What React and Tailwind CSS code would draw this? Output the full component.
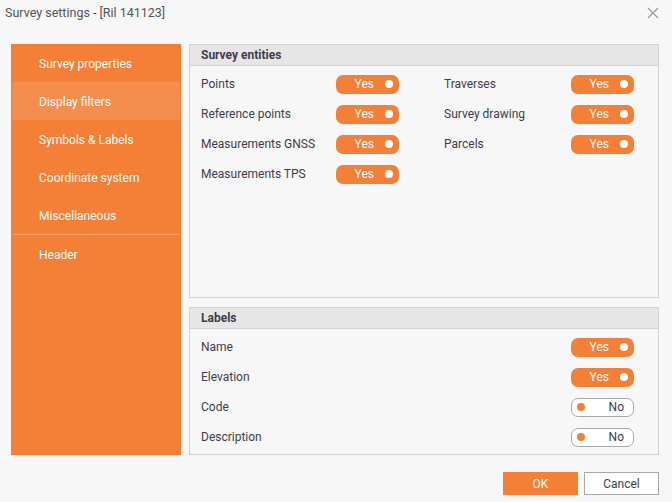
import React from "react";

const font = { fontFamily: "Roboto, 'Noto Sans', sans-serif" };

function Toggle({ on }) {
  if (on) {
    return (
      <div className="flex h-[19px] w-[63px] items-center justify-end rounded-[7px] bg-[#f47f36] pr-[6px] text-[12px] text-white">
        <span className="leading-none">Yes</span>
        <span className="ml-[11px] h-[8px] w-[8px] rounded-full bg-white" />
      </div>
    );
  }
  return (
    <div className="box-border flex h-[19px] w-[63px] items-center rounded-[7px] border border-[#a8a8a8] bg-white pl-[5px] pr-[9px] text-[12px] text-[#3d3d4d]">
      <span className="h-[8px] w-[8px] rounded-full bg-[#f47f36]" />
      <span className="ml-auto leading-none">No</span>
    </div>
  );
}

function Row({ label, on, labelW }) {
  return (
    <div className="flex h-[30px] items-center">
      <span className="text-[12px] text-[#3d3d4d]" style={{ width: labelW }}>
        {label}
      </span>
      <Toggle on={on} />
    </div>
  );
}

const navItems = [
  "Survey properties",
  "Display filters",
  "Symbols & Labels",
  "Coordinate system",
  "Miscellaneous",
];

export default function App() {
  return (
    <div
      className="flex h-[502px] w-[672px] flex-col bg-[#f7f7f7] text-[#3d3d4d]"
      style={font}
    >
      {/* title bar */}
      <div className="flex h-[44px] items-start justify-between pl-[5px] pr-[13px] pt-[5px]">
        <span className="text-[12.5px] leading-[16px] text-[#555]">
          Survey settings - [Ril 141123]
        </span>
        <svg width="12" height="12" viewBox="0 0 12 12" className="mt-[2px]">
          <path d="M1 1L11 11M11 1L1 11" stroke="#9a9a9a" strokeWidth="1.2" />
        </svg>
      </div>

      {/* body */}
      <div className="flex h-[411px] gap-[8px] pl-[11px] pr-[13px]">
        <div className="flex w-[170px] flex-col bg-[#f47f36] px-[1px]">
          {navItems.map((t) => (
            <div
              key={t}
              className={
                "flex h-[38px] items-center pl-[27px] pt-[2px] text-[12px] text-white " +
                (t === "Display filters" ? "bg-[#f58d4e]" : "")
              }
            >
              {t}
            </div>
          ))}
          <div className="h-[1px] bg-[#f69c66]" />
          <div className="flex h-[38px] items-center pl-[27px] pt-[2px] text-[12px] text-white">
            Header
          </div>
        </div>

        <div className="flex flex-1 flex-col gap-[9px]">
          {/* Survey entities */}
          <div className="flex h-[254px] flex-col border border-[#d2d2d2] bg-[#f7f7f7]">
            <div className="flex h-[21px] items-center border-b border-[#d2d2d2] bg-[#e6e6e6] pl-[11px] text-[12px] font-bold text-[#3d3d4d]">
              Survey entities
            </div>
            <div className="flex pl-[11px] pt-[3px]">
              <div className="flex w-[243px] flex-col">
                <Row label="Points" on labelW={135} />
                <Row label="Reference points" on labelW={135} />
                <Row label="Measurements GNSS" on labelW={135} />
                <Row label="Measurements TPS" on labelW={135} />
              </div>
              <div className="flex flex-col">
                <Row label="Traverses" on labelW={127} />
                <Row label="Survey drawing" on labelW={127} />
                <Row label="Parcels" on labelW={127} />
              </div>
            </div>
          </div>

          {/* Labels */}
          <div className="flex h-[148px] flex-col border border-[#d2d2d2] bg-[#f7f7f7]">
            <div className="flex h-[21px] items-center border-b border-[#d2d2d2] bg-[#e6e6e6] pl-[11px] text-[12px] font-bold text-[#3d3d4d]">
              Labels
            </div>
            <div className="flex flex-col pl-[11px] pt-[3px]">
              <Row label="Name" on labelW={370} />
              <Row label="Elevation" on labelW={370} />
              <Row label="Code" on={false} labelW={370} />
              <Row label="Description" on={false} labelW={370} />
            </div>
          </div>
        </div>
      </div>

      {/* footer */}
      <div className="flex justify-end gap-[6px] pr-[13px] pt-[17px]">
        <button className="h-[23px] w-[75px] bg-[#f47f36] text-[12px] text-white">
          OK
        </button>
        <button className="box-border h-[23px] w-[75px] border border-[#a8a8a8] bg-white text-[12px] text-[#3d3d4d]">
          Cancel
        </button>
      </div>
    </div>
  );
}
